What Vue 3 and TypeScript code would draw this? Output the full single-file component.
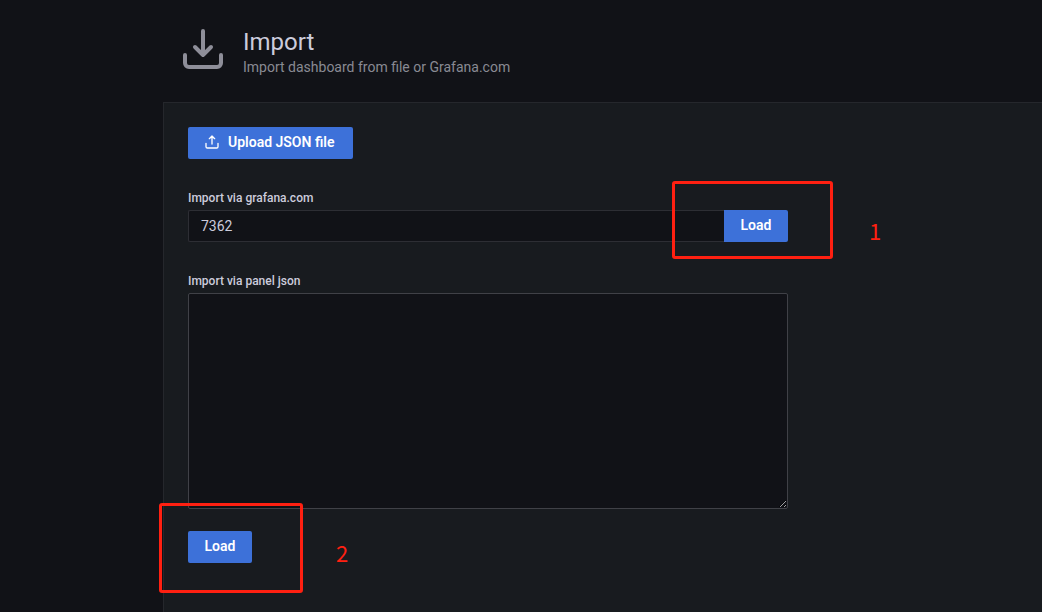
<script setup lang="ts">
import { ref } from 'vue'

const dashboardId = ref('7362')
const panelJson = ref('')
</script>

<template>
  <main class="page">
    <header class="page-header">
      <svg class="page-icon" viewBox="0 0 24 24" aria-hidden="true">
        <path d="M12 3v12M8 11l4 4 4-4M3 15v4a2 2 0 0 0 2 2h14a2 2 0 0 0 2-2v-4" />
      </svg>
      <div>
        <h1>Import</h1>
        <p class="subtitle">Import dashboard from file or Grafana.com</p>
      </div>
    </header>

    <section class="panel">
      <button type="button" class="btn upload">
        <svg class="btn-icon" viewBox="0 0 24 24" aria-hidden="true">
          <path d="M12 15V3M8 7l4-4 4 4M3 14v5a2 2 0 0 0 2 2h14a2 2 0 0 0 2-2v-5" />
        </svg>
        Upload JSON file
      </button>

      <form class="field" @submit.prevent>
        <label for="dashboard-id">Import via grafana.com</label>
        <div class="input-group">
          <input id="dashboard-id" v-model="dashboardId" type="text" />
          <div class="marked">
            <button type="submit" class="btn load joined">Load</button>
            <div class="callout callout-first"><span class="number">1</span></div>
          </div>
        </div>
      </form>

      <form class="field" @submit.prevent>
        <label for="panel-json">Import via panel json</label>
        <textarea id="panel-json" v-model="panelJson" rows="10"></textarea>
        <div class="marked submit">
          <button type="submit" class="btn load">Load</button>
          <div class="callout callout-second"><span class="number">2</span></div>
        </div>
      </form>
    </section>
  </main>
</template>

<style>
body {
  margin: 0;
  background: #111217;
}
</style>

<style scoped>
.page {
  box-sizing: border-box;
  display: flex;
  flex-direction: column;
  min-height: 100vh;
  padding-left: 163px;
  overflow: hidden;
  color: #ccccdc;
  font-family: Roboto, "Liberation Sans", sans-serif;
  font-size: 14px;
}

.page-header {
  display: flex;
  gap: 16px;
  padding: 25px 16px;
}

.page-icon {
  flex: none;
  width: 48px;
  height: 48px;
}

.page-icon path,
.btn-icon path {
  fill: none;
  stroke: #8e8e99;
  stroke-width: 2;
  stroke-linecap: round;
  stroke-linejoin: round;
}

h1 {
  margin: 2px 0 0;
  font-size: 24px;
  line-height: 30px;
  font-weight: 400;
}

.subtitle {
  margin: 0;
  font-size: 14px;
  line-height: 20px;
  color: #898a93;
}

.panel {
  flex: 1;
  padding: 24px;
  background: #181b1f;
  border: 1px solid #25272c;
  border-width: 1px 0 0 1px;
}

.btn {
  height: 32px;
  padding: 0 16px 2px;
  border: 0;
  border-radius: 2px;
  background: #3d71d9;
  color: #ffffff;
  font: 600 14px/30px Roboto, "Liberation Sans", sans-serif;
  cursor: pointer;
}

.upload {
  display: flex;
  align-items: center;
  gap: 8px;
  min-width: 165px;
}

.load {
  display: block;
  width: 100%;
}

.btn-icon {
  width: 16px;
  height: 16px;
}

.btn-icon path {
  stroke: #ffffff;
}

.joined {
  border-radius: 0 2px 2px 0;
}

.field {
  max-width: 600px;
  margin-top: 32px;
}

label {
  display: block;
  margin-bottom: 4px;
  font-size: 12px;
  line-height: 15px;
  font-weight: 500;
}

.input-group {
  display: flex;
}

input,
textarea {
  box-sizing: border-box;
  margin: 0;
  background: #111217;
  color: #ccccdc;
  border: 1px solid #2d2e34;
  border-radius: 2px;
  font: 400 14px/20px Roboto, "Liberation Sans", sans-serif;
  outline: none;
}

input {
  flex: 1;
  min-width: 0;
  height: 32px;
  padding: 0 12px;
  border-right: 0;
  border-radius: 2px 0 0 2px;
}

textarea {
  display: block;
  width: 100%;
  height: 216px;
  padding: 4px 8px;
  border-color: #404147;
}

.marked {
  position: relative;
  width: 64px;
}

.submit {
  margin-top: 22px;
}

.callout {
  position: absolute;
  box-sizing: border-box;
  border: 3px solid #ff2011;
  border-radius: 3px;
  pointer-events: none;
}

.callout-first {
  inset: -29px -45px -17px -52px;
}

.callout-second {
  inset: -28px -51px -30px -29px;
}

.number {
  position: absolute;
  top: 34px;
  left: 100%;
  margin-left: 36px;
  color: #ff2011;
  font: 400 22px/24px "Noto Sans CJK SC", sans-serif;
}

.callout-first .number {
  margin-left: 39px;
}
</style>
